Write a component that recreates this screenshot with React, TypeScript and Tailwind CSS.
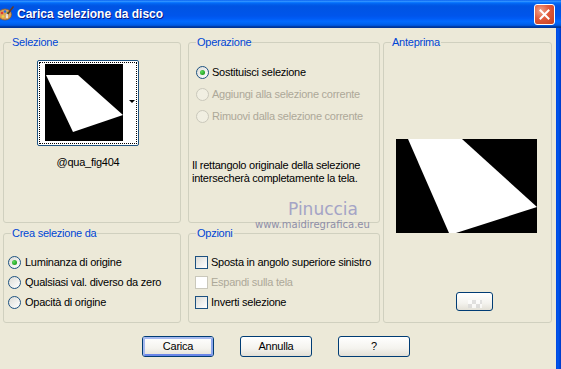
import React from "react";

const font = { fontFamily: '"Liberation Sans", Arial, sans-serif' };

function Radio({ checked, disabled }: { checked?: boolean; disabled?: boolean }) {
  return (
    <span
      className={
        "flex h-[13px] w-[13px] shrink-0 items-center justify-center rounded-full border " +
        (disabled
          ? "border-[#CAC8BB] bg-[#F1EFE2]"
          : "border-[#1C5180] bg-[linear-gradient(135deg,#DCDCD7,#FFFFFF)]")
      }
    >
      {checked && (
        <span className="h-[5px] w-[5px] rounded-full bg-[radial-gradient(circle_at_35%_35%,#5DDD5D,#21A121_70%)]" />
      )}
    </span>
  );
}

function Check({ disabled }: { disabled?: boolean }) {
  return (
    <span
      className={
        "h-[13px] w-[13px] shrink-0 border " +
        (disabled
          ? "border-[#CAC8BB] bg-[#FFFFFF]"
          : "border-[#1C5180] bg-[linear-gradient(135deg,#DCDCD7,#FFFFFF)]")
      }
    />
  );
}

function Group({
  label,
  className,
  children,
}: {
  label: string;
  className: string;
  children?: React.ReactNode;
}) {
  return (
    <fieldset className={"rounded-[3px] border border-[#D0D0BF] " + className}>
      <legend className="ml-[7px] px-[1px] text-[11px] leading-[14px] text-[#0046D5]">{label}</legend>
      {children}
    </fieldset>
  );
}

function XpButton({ label, isDefault }: { label: string; isDefault?: boolean }) {
  return (
    <button className="h-[21px] w-[72px] rounded-[3px] border border-[#003C74] bg-[linear-gradient(to_bottom,#FFFFFF,#F4F3EE_60%,#E3E0D6)] p-0 text-[11px] text-black">
      <span
        className={
          "flex h-full w-full items-center justify-center rounded-[2px] " +
          (isDefault ? "border-2 border-[#A6B9EE] border-b-[#6A86E8] border-r-[#8CA6EC]" : "")
        }
      >
        {label}
      </span>
    </button>
  );
}

function PaletteIcon() {
  return (
    <svg width="16" height="16" viewBox="0 0 16 16" className="ml-[-2px]">
      <ellipse cx="7" cy="8.5" rx="6.5" ry="5.5" fill="#D9A05B" stroke="#8A5A2B" strokeWidth="0.8" />
      <circle cx="4" cy="7" r="1.3" fill="#E23B2E" />
      <circle cx="7" cy="5.5" r="1.3" fill="#2C6BE0" />
      <circle cx="10" cy="7" r="1.3" fill="#3BB34A" />
      <circle cx="5" cy="10.5" r="1.3" fill="#F2D33A" />
      <circle cx="9" cy="11" r="1.2" fill="#ECE9D8" />
      <path d="M15 1 L9 9" stroke="#6B3A1E" strokeWidth="1.6" strokeLinecap="round" />
      <path d="M9.6 8.2 L8.4 9.8" stroke="#E8E8E8" strokeWidth="2" />
    </svg>
  );
}

export default function App() {
  return (
    <div className="relative flex h-[369px] w-[561px] flex-col overflow-hidden bg-[#ECE9D8] text-[11px] tracking-[-0.25px] text-black" style={font}>
      {/* title bar */}
      <div className="flex h-[28px] shrink-0 items-center bg-[linear-gradient(to_bottom,#0058EE_0%,#3593FF_4%,#288EFF_6%,#127DFF_8%,#036FFC_10%,#0262EE_14%,#0057E5_20%,#0054E3_24%,#0055EB_56%,#005BF5_66%,#026AFE_76%,#0062EF_86%,#0052D6_92%,#0040AB_94%,#003092_100%)]">
        <PaletteIcon />
        <span className="ml-[3px] text-[12px] font-bold tracking-normal text-white [text-shadow:1px_1px_0_#0A1883]">
          Carica selezione da disco
        </span>
        <div className="ml-auto mr-[6px] flex h-[21px] w-[21px] items-center justify-center rounded-[3px] border border-white bg-[radial-gradient(circle_at_30%_30%,#F0A48C,#E0593A_45%,#C63F1E)]">
          <svg width="11" height="11" viewBox="0 0 11 11">
            <path d="M1.5 1.5 L9.5 9.5 M9.5 1.5 L1.5 9.5" stroke="white" strokeWidth="2" strokeLinecap="square" />
          </svg>
        </div>
      </div>

      <div className="flex flex-1">
        <div className="flex flex-1 flex-col pl-[3px] pt-[7px] whitespace-nowrap">
          <div className="flex">
            {/* left column */}
            <div className="flex w-[178px] flex-col gap-[3px]">
              <Group label="Selezione" className="h-[188px]">
                <div className="ml-[33px] mt-[11px] flex w-[102px] flex-col items-center">
                  <div className="h-[86px] w-[102px] rounded-[2px] border border-[#1C5180] bg-white p-[1px]">
                    <div className="flex h-full w-full border border-dotted border-black pl-[5px] pt-[1px]">
                      <div className="h-[77px] w-[78px] bg-black">
                        <svg width="78" height="77" viewBox="0 0 78 77">
                          <polygon points="1,11 33,11 78,51 28,68" fill="white" />
                        </svg>
                      </div>
                      <div className="flex flex-1 items-center justify-end pb-[4px] pr-[1px]">
                        <span className="h-0 w-0 border-x-[3px] border-t-[3px] border-x-transparent border-t-black" />
                      </div>
                    </div>
                  </div>
                  <div className="mt-[10px] leading-[13px]">@qua_fig404</div>
                </div>
              </Group>
              <Group label="Crea selezione da" className="h-[97px]">
                <div className="ml-[4px] mt-[12px] flex flex-col">
                  <div className="flex h-[20px] items-center gap-[4px]">
                    <Radio checked />
                    <span>Luminanza di origine</span>
                  </div>
                  <div className="flex h-[20px] items-center gap-[4px]">
                    <Radio />
                    <span>Qualsiasi val. diverso da zero</span>
                  </div>
                  <div className="flex h-[20px] items-center gap-[4px]">
                    <Radio />
                    <span>Opacità di origine</span>
                  </div>
                </div>
              </Group>
            </div>

            {/* middle column */}
            <div className="ml-[7px] flex w-[192px] flex-col gap-[3px]">
              <Group label="Operazione" className="h-[188px]">
                <div className="ml-[7px] mt-[12px] flex flex-col">
                  <div className="flex h-[22px] items-center gap-[3px]">
                    <Radio checked />
                    <span>Sostituisci selezione</span>
                  </div>
                  <div className="flex h-[22px] items-center gap-[3px] text-[#ACA899]">
                    <Radio disabled />
                    <span>Aggiungi alla selezione corrente</span>
                  </div>
                  <div className="flex h-[22px] items-center gap-[3px] text-[#ACA899]">
                    <Radio disabled />
                    <span>Rimuovi dalla selezione corrente</span>
                  </div>
                </div>
                <p className="ml-[3px] mt-[32px] leading-[13px]">
                  Il rettangolo originale della selezione
                  <br />
                  intersecherà completamente la tela.
                </p>
              </Group>
              <Group label="Opzioni" className="h-[97px]">
                <div className="ml-[6px] mt-[12px] flex flex-col">
                  <div className="flex h-[20px] items-center gap-[3px]">
                    <Check />
                    <span>Sposta in angolo superiore sinistro</span>
                  </div>
                  <div className="flex h-[20px] items-center gap-[3px] text-[#ACA899]">
                    <Check disabled />
                    <span>Espandi sulla tela</span>
                  </div>
                  <div className="flex h-[20px] items-center gap-[3px]">
                    <Check />
                    <span>Inverti selezione</span>
                  </div>
                </div>
              </Group>
            </div>

            {/* right column */}
            <div className="ml-[3px] w-[169px]">
              <Group label="Anteprima" className="h-[288px]">
                <div className="ml-[12px] mt-[90px] h-[94px] w-[141px] bg-black">
                  <svg width="141" height="94" viewBox="0 0 141 94">
                    <polygon points="12,0 66,0 141,68 60,94 53,94" fill="white" />
                  </svg>
                </div>
                <div className="ml-[72px] mt-[59px] flex h-[19px] w-[37px] items-end justify-center rounded-[3px] border border-[#003C74] bg-[linear-gradient(to_bottom,#FFFFFF,#F4F3EE_60%,#E3E0D6)] pb-[2px]">
                  <span className="h-[8px] w-[14px] bg-[repeating-conic-gradient(#D8D8D8_0_25%,#FFFFFF_0_50%)] bg-[length:8px_8px] opacity-70" />
                </div>
              </Group>
            </div>
          </div>

          {/* buttons */}
          <div className="mt-[13px] flex gap-[26px] pl-[139px]">
            <XpButton label="Carica" isDefault />
            <XpButton label="Annulla" />
            <XpButton label="?" />
          </div>
        </div>
        <div className="w-[5px] bg-[linear-gradient(to_right,#0046E0,#0058EE_40%,#0038C8)]" />
      </div>

      {/* watermark */}
      <div
        className="absolute left-[288px] top-[199px] text-[17px] leading-[20px] tracking-normal text-[#A4A4C6]"
        style={{ fontFamily: '"DejaVu Sans", sans-serif' }}
      >
        Pinuccia
      </div>
      <div
        className="absolute left-[255px] top-[219px] text-[10px] leading-[12px] tracking-normal text-[#8E8EA8]"
        style={{ fontFamily: '"DejaVu Sans", sans-serif' }}
      >
        www.maidiregrafica.eu
      </div>
    </div>
  );
}
